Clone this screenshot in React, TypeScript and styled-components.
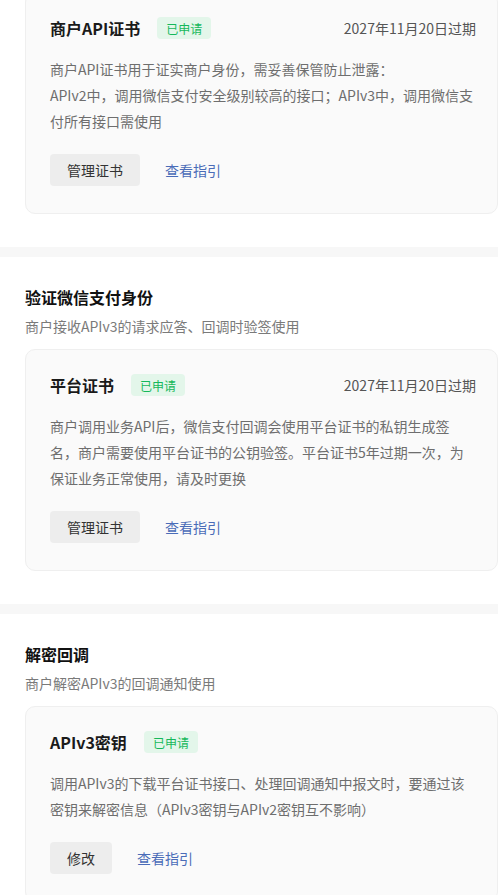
import styled, { createGlobalStyle } from 'styled-components';

const GlobalStyle = createGlobalStyle`
    html, body {
        margin: 0;
        padding: 0;
        background: #ffffff;
        overflow: hidden;
    }
    body {
        font-family: "PingFang SC", "Noto Sans CJK SC", "Noto Sans", sans-serif;
        -webkit-font-smoothing: antialiased;
    }
`;

const Page = styled.main`
    width: 498px;
    display: flex;
    flex-direction: column;
`;

const Section = styled.section<{cut?: boolean}>`
    display: flex;
    flex-direction: column;
    padding: ${props => props.cut ? "0" : "28px"} 0 33px 25px;
    margin-top: ${props => props.cut ? "-8px" : "0"};
`;

const Divider = styled.div`
    height: 10px;
    background-color: #f7f7f7;
`;

const SectionTitle = styled.h2`
    margin: 0;
    font-size: 16px;
    line-height: 24px;
    font-weight: 600;
    color: #111111;
`;

const SectionDesc = styled.p`
    margin: 7px 0 0 0;
    font-size: 14px;
    line-height: 20px;
    color: #7a7a7a;
`;

const Card = styled.article<{first?: boolean}>`
    margin-top: ${props => props.first ? "0" : "13px"};
    background-color: #fafafa;
    border: 1px solid #efefef;
    border-radius: 10px;
    padding: 23px 21px 27px 24px;
`;

const CardHead = styled.div`
    display: flex;
    align-items: center;
    height: 24px;
`;

const CardTitle = styled.h3`
    margin: 0;
    font-size: 16px;
    line-height: 24px;
    font-weight: 600;
    color: #1a1a1a;
`;

const Badge = styled.span`
    margin-left: 17px;
    height: 22px;
    padding: 0 9px;
    display: inline-flex;
    align-items: center;
    border-radius: 4px;
    background-color: #e3f6ea;
    color: #15b85a;
    font-size: 12px;
`;

const Expire = styled.span`
    margin-left: auto;
    font-size: 14px;
    color: #555555;
`;

const CardText = styled.p`
    margin: 16px 0 0 0;
    width: 426px;
    font-size: 14px;
    line-height: 26px;
    color: #6e6e6e;
    white-space: pre-line;
`;

const Actions = styled.div`
    display: flex;
    align-items: center;
    gap: 25px;
    margin-top: 20px;
`;

const Button = styled.button`
    height: 32px;
    padding: 0 17px;
    border: none;
    border-radius: 4px;
    background-color: #ededed;
    color: #333333;
    font-family: inherit;
    font-size: 14px;
    cursor: pointer;
`;

const GuideLink = styled.a`
    font-size: 14px;
    color: #4a6cb8;
    text-decoration: none;
    cursor: pointer;
`;

type CertCardProps = {
    title: string;
    expire?: string;
    text: string;
    action: string;
    first?: boolean;
}

const CertCard = (props: CertCardProps) => {
    return(
        <Card first={props.first}>
            <CardHead>
                <CardTitle>{props.title}</CardTitle>
                <Badge>已申请</Badge>
                {props.expire && <Expire>{props.expire}</Expire>}
            </CardHead>
            <CardText>{props.text}</CardText>
            <Actions>
                <Button>{props.action}</Button>
                <GuideLink>查看指引</GuideLink>
            </Actions>
        </Card>
    );
}

const App = () => {
    return(
        <Page>
            <GlobalStyle/>
            <Section cut={true}>
                <CertCard
                    first={true}
                    title="商户API证书"
                    expire="2027年11月20日过期"
                    text={"商户API证书用于证实商户身份，需妥善保管防止泄露：\nAPIv2中，调用微信支付安全级别较高的接口；APIv3中，调用微信支付所有接口需使用"}
                    action="管理证书"
                />
            </Section>
            <Divider/>
            <Section>
                <SectionTitle>验证微信支付身份</SectionTitle>
                <SectionDesc>商户接收APIv3的请求应答、回调时验签使用</SectionDesc>
                <CertCard
                    title="平台证书"
                    expire="2027年11月20日过期"
                    text="商户调用业务API后，微信支付回调会使用平台证书的私钥生成签名，商户需要使用平台证书的公钥验签。平台证书5年过期一次，为保证业务正常使用，请及时更换"
                    action="管理证书"
                />
            </Section>
            <Divider/>
            <Section>
                <SectionTitle>解密回调</SectionTitle>
                <SectionDesc>商户解密APIv3的回调通知使用</SectionDesc>
                <CertCard
                    title="APIv3密钥"
                    text="调用APIv3的下载平台证书接口、处理回调通知中报文时，要通过该密钥来解密信息（APIv3密钥与APIv2密钥互不影响）"
                    action="修改"
                />
            </Section>
        </Page>
    );
}

export default App;
